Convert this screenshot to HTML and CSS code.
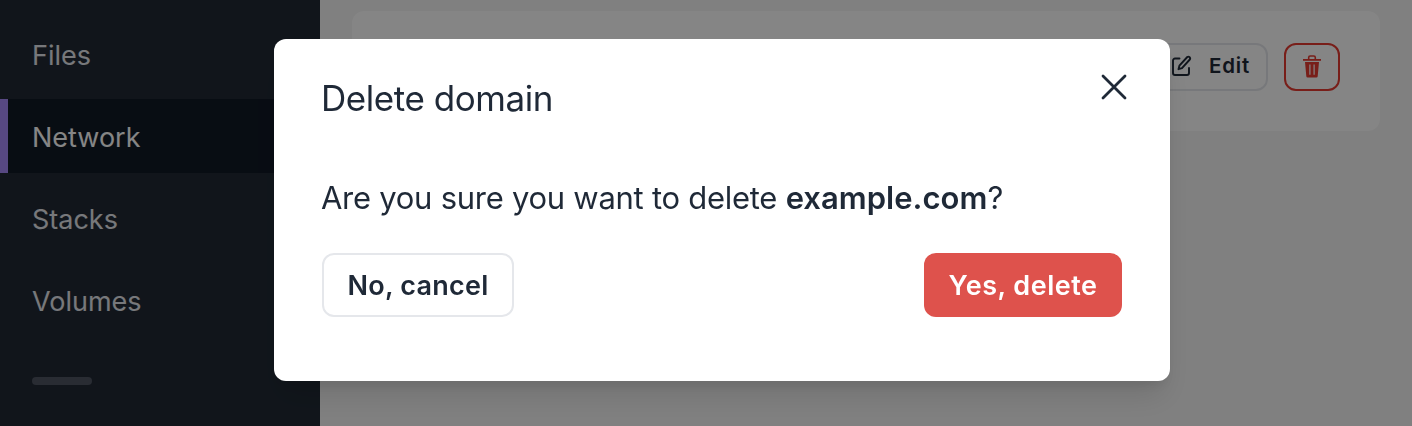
FILE: index.html
```html
<!DOCTYPE html>
<html lang="en">
<head>
<meta charset="utf-8">
<title>Delete domain</title>
<link rel="stylesheet" href="styles.css">
</head>
<body>
<div class="app">
  <nav class="sidebar">
    <a class="nav-item"><span class="nav-label">Files</span></a>
    <a class="nav-item active"><span class="nav-label">Network</span></a>
    <a class="nav-item"><span class="nav-label">Stacks</span></a>
    <a class="nav-item"><span class="nav-label">Volumes</span></a>
    <div class="divider"></div>
  </nav>
  <main class="content">
    <section class="card">
      <button class="btn-edit">
        <svg width="22" height="22" viewBox="0 0 22 22" fill="none" stroke="currentColor" stroke-width="1.900" stroke-linecap="round" stroke-linejoin="round"><path d="M8.500 3.500H4a2 2 0 0 0-2 2V18a2 2 0 0 0 2 2h12a2 2 0 0 0 2-2v-5"/><path d="M16.300 2a1.800 1.800 0 0 1 2.500 2.500L11 13.200l-3.500 1 .9-3.500z"/></svg>
        <span>Edit</span>
      </button>
      <button class="btn-trash" aria-label="Delete">
        <svg width="18" height="23" viewBox="0 0 18 23"><path d="M5.700 4V2.500Q5.700 1 7.200 1h3.600q1.500 0 1.500 1.500V4" fill="none" stroke="currentColor" stroke-width="1.600"/><path d="M0 4h18v1.800H0z" fill="currentColor"/><path fill="currentColor" fill-rule="evenodd" d="M2 7h14l-1.300 14.300q-.1 1.200-1.300 1.200H4.600q-1.200 0-1.300-1.200zM6.300 9.600v10.200h1.200V9.600zM10.500 9.600v10.200h1.200V9.600z"/></svg>
      </button>
    </section>
  </main>
</div>
<div class="overlay">
  <div class="modal" role="dialog">
    <header class="modal-head">
      <h1>Delete domain</h1>
      <button class="close" aria-label="Close"><svg width="26" height="26" viewBox="0 0 26 26" fill="none" stroke="currentColor" stroke-width="2.800" stroke-linecap="round"><path d="M2 2l22 22M24 2L2 24"/></svg></button>
    </header>
    <p class="message">Are you sure you want to delete <strong>example.com</strong>?</p>
    <div class="actions">
      <button class="btn cancel">No, cancel</button>
      <button class="btn danger">Yes, delete</button>
    </div>
  </div>
</div>
</body>
</html>
```
FILE: styles.css
```css
* { box-sizing: border-box; }
body { margin: 0; font-family: Inter, sans-serif; color: #1f2937; overflow: hidden; }
button { font: inherit; color: inherit; margin: 0; padding: 0; background: none; border: 0; }
svg { display: block; }
.app { display: flex; width: 1412px; height: 426px; background: #f5f5f5; }
.sidebar { width: 320px; padding-top: 17px; background: #212a35; display: flex; flex-direction: column; gap: 8px; }
.nav-item { height: 74px; display: flex; align-items: center; padding-left: 24px; border-left: 8px solid transparent; color: #e5e7eb; font-size: 27px; line-height: 42px; letter-spacing: 0; }
.active { background: #101926; border-left-color: #a78bfa; color: #fff; }
.nav-label { padding-top: 3px; }
.divider { width: 60px; height: 8px; margin: 32px 0 0 32px; border-radius: 4px; background: #4f5562; }
.content { flex: 1; padding: 11px 32px 0; }
.card { height: 120px; border-radius: 12px; background: #fff; padding: 32px 40px; display: flex; justify-content: flex-end; gap: 16px; }
.btn-edit { width: 123px; height: 48px; display: flex; align-items: center; gap: 16px; padding: 0 0 3px 24px; border: 2px solid #e5e7eb; border-radius: 12px; font-size: 20.500px; font-weight: 600; letter-spacing: .8px; }
.btn-trash { width: 56px; height: 48px; padding-bottom: 2px; display: flex; align-items: center; justify-content: center; border: 2px solid #e63b31; border-radius: 12px; color: #e63b31; }
.overlay { position: fixed; inset: 0; background: rgba(0, 0, 0, .48); padding: 39px 0 0 274px; }
.modal { width: 896px; height: 342px; padding: 34px 43px 0 48px; background: #fff; border-radius: 12px; box-shadow: 0 20px 30px -6px rgba(0, 0, 0, .12), 0 8px 12px -4px rgba(0, 0, 0, .08); }
.modal-head { display: flex; justify-content: space-between; height: 98px; }
h1 { margin: 0 0 0 -1px; font-size: 35px; line-height: 51px; font-weight: 400; letter-spacing: -.45px; }
.close { width: 26px; height: 26px; margin-top: 1px; }
.message { margin: 0 0 0 -1px; font-size: 31px; line-height: 53px; white-space: nowrap; letter-spacing: -.27px; }
strong { font-weight: 600; letter-spacing: .03px; }
.actions { display: flex; justify-content: space-between; margin: 29px 5px 0 0; }
.btn { height: 64px; padding-top: 1px; border-radius: 12px; font-size: 27px; font-weight: 600; white-space: nowrap; }
.cancel { width: 192px; border: 2px solid #e5e7eb; letter-spacing: .25px; }
.danger { width: 198px; background: #de524c; color: #fff; letter-spacing: .5px; }
```
